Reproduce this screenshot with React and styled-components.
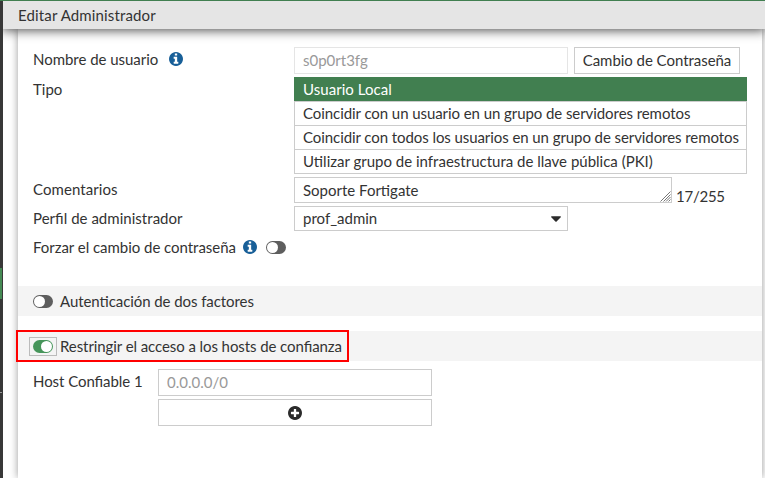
import React from 'react';
import styled, { createGlobalStyle } from 'styled-components';

const Global = createGlobalStyle`
  * { box-sizing: border-box; }
  body { margin: 0; background: #fff; overflow: hidden; }
  body, input, button, textarea { font: 15px/20px Lato, sans-serif; color: #333; }
`;

const Window = styled.div`
  display: flex;
  height: 478px;
  border-top: 1px solid #417f50;
`;

const Rail = styled.div`
  width: 3px;
  flex: none;
  display: flex;
  flex-direction: column;
  background: #383838;
`;

const RailActive = styled.div`
  width: 2px;
  height: 31px;
  margin-top: 267px;
  background: #458a54;
`;

const RailLine = styled.div`
  width: 2px;
  height: 1px;
  margin-top: 93px;
  background: #999;
`;

const Main = styled.div`
  flex: 1;
  display: flex;
  flex-direction: column;
`;

const Header = styled.header`
  position: relative;
  z-index: 1;
  height: 28px;
  flex: none;
  padding: 4px 15px;
  background: #e5e5e5;
  box-shadow: 0 0 12px 1px rgba(0, 0, 0, 0.75);
  clip-path: inset(0 0 -20px 0);
`;

const Text = styled.span`
  letter-spacing: ${(p) => p.$track || 0}px;
  font-feature-settings: 'liga' 1;
  white-space: nowrap;
`;

const Panel = styled.main`
  flex: 1;
  margin: 0 3px 0 15px;
  background: #fff;
  box-shadow: 0 0 8px rgba(0, 0, 0, 0.4);
`;

const Form = styled.div`
  display: flex;
  flex-direction: column;
  gap: 3px;
  padding: 18px 15px 0;
`;

const Row = styled.div`
  display: flex;
  align-items: flex-start;
`;

const Label = styled.label`
  display: flex;
  align-items: center;
  align-self: flex-start;
  width: ${(p) => p.$width || 261}px;
  flex: none;
  white-space: nowrap;
  padding-top: ${(p) => p.$top ?? 2}px;
`;

const Input = styled.input`
  width: 274px;
  height: 27px;
  padding: 0 8px 2px;
  border: 1px solid #ccc;
  border-radius: 0;
  background: #fff;
  outline: none;
  &:disabled { color: #999; border-color: #e5e5e5; }
  &::placeholder { color: #999; opacity: 1; }
`;

const Button = styled.button`
  height: 27px;
  width: ${(p) => p.$width}px;
  margin-left: ${(p) => p.$gap || 0}px;
  display: flex;
  align-items: center;
  justify-content: center;
  padding: 0 0 ${(p) => p.$lift || 0}px;
  white-space: nowrap;
  border: 1px solid #ccc;
  background: #fff;
`;

const Options = styled.div`
  width: 453px;
  border-bottom: 1px solid #ccc;
`;

const Option = styled.div`
  height: 24px;
  padding: 1px 8px;
  border: 1px solid ${(p) => (p.$active ? '#417f50' : '#ccc')};
  border-bottom: 0;
  background: ${(p) => (p.$active ? '#417f50' : '#fff')};
  color: ${(p) => (p.$active ? '#fff' : '#333')};
`;

const CommentBox = styled.div`
  position: relative;
`;

const Comment = styled.textarea`
  display: block;
  width: 378px;
  height: 26px;
  padding: 2px 8px;
  border: 1px solid #ccc;
  overflow: hidden;
  outline: none;
  resize: none;
`;

const Grip = styled.svg`
  position: absolute;
  right: 1px;
  bottom: 1px;
  width: 11px;
  height: 11px;
`;

const Counter = styled.span`
  margin: 9px 0 -3px 4px;
`;

const Select = styled.div`
  width: 274px;
  height: 25px;
  display: flex;
  align-items: center;
  justify-content: space-between;
  padding: 0 6px 0 8px;
  border: 1px solid #ccc;
`;

const SelectValue = styled.span`
  padding-bottom: 2px;
`;

const Icon = styled.svg`
  display: block;
  width: 14px;
  height: 14px;
  flex: none;
  margin-left: ${(p) => p.$gap || 0}px;
`;

const Caret = styled.svg`
  width: 10px;
  height: 6px;
`;

const Switch = styled.span`
  width: 20px;
  height: 13px;
  flex: none;
  display: flex;
  justify-content: ${(p) => (p.$on ? 'flex-end' : 'flex-start')};
  padding: 1px;
  margin-left: ${(p) => p.$gap || 0}px;
  border-radius: 7px;
  background: ${(p) => (p.$on ? '#46955a' : '#5e5e5e')};
  &::before {
    content: '';
    width: 11px;
    height: 11px;
    border-radius: 50%;
    background: #fff;
  }
`;

const Section = styled.section`
  position: relative;
  display: flex;
  align-items: center;
  height: 30px;
  margin-top: ${(p) => p.$top}px;
  padding-left: 11px;
  background: #f4f4f4;
`;

const Focus = styled.span`
  display: flex;
  align-items: center;
  justify-content: center;
  width: 28px;
  height: 19px;
  margin-right: 3px;
  border: 1px solid ${(p) => (p.$on ? '#bbb' : 'transparent')};
`;

const Highlight = styled.span`
  position: absolute;
  left: -2px;
  top: -1px;
  width: 333px;
  height: 32px;
  border: 2px solid #f00;
`;

const Hosts = styled.div`
  display: flex;
  padding: 8px 15px;
`;

const Stack = styled.div`
  display: flex;
  flex-direction: column;
  gap: 3px;
`;

const CIRCLE = 'M1664 896q0 209-103 385.5t-279.5 279.5-385.5 103-385.5-103-279.5-279.5-103-385.5 103-385.5 279.5-279.5 385.5-103 385.5 103 279.5 279.5 103 385.5z';

const Info = ({ gap }) => (
  <Icon $gap={gap} viewBox="128 128 1536 1536" fill="#185f98">
    <path fillRule="evenodd" d={`M1152 1376v-160q0-14-9-23t-23-9h-96v-512q0-14-9-23t-23-9h-320q-14 0-23 9t-9 23v160q0 14 9 23t23 9h96v320h-96q-14 0-23 9t-9 23v160q0 14 9 23t23 9h448q14 0 23-9t9-23zM1024 480v-160q0-14-9-23t-23-9h-192q-14 0-23 9t-9 23v160q0 14 9 23t23 9h192q14 0 23-9t9-23z${CIRCLE}`} />
  </Icon>
);

const Plus = () => (
  <Icon viewBox="128 128 1536 1536" fill="#2b2b2b">
    <path fillRule="evenodd" d={`M1344 960v-128q0-26-19-45t-45-19h-256v-256q0-26-19-45t-45-19h-128q-26 0-45 19t-19 45v256h-256q-26 0-45 19t-19 45v128q0 26 19 45t45 19h256v256q0 26 19 45t45 19h128q26 0 45-19t19-45v-256h256q26 0 45-19t19-45z${CIRCLE}`} />
  </Icon>
);

const TYPES = [
  { name: 'Usuario Local', track: 0.04 },
  { name: 'Coincidir con un usuario en un grupo de servidores remotos', track: -0.07 },
  { name: 'Coincidir con todos los usuarios en un grupo de servidores remotos', track: -0.075 },
  { name: 'Utilizar grupo de infraestructura de llave pública (PKI)', track: 0 },
];

export default function App() {
  return (
    <>
      <Global />
      <Window>
        <Rail>
          <RailActive />
          <RailLine />
        </Rail>
        <Main>
          <Header><Text $track={0.14}>Editar Administrador</Text></Header>
          <Panel>
            <Form>
              <Row>
                <Label><Text $track={-0.03}>Nombre de usuario</Text><Info gap={11} /></Label>
                <Input disabled defaultValue="s0p0rt3fg" />
                <Button $width={166} $gap={6} $lift={1}><Text $track={-0.04}>Cambio de Contraseña</Text></Button>
              </Row>
              <Row>
                <Label>Tipo</Label>
                <Options>
                  {TYPES.map((type, i) => (
                    <Option key={type.name} $active={i === 0}>
                      <Text $track={type.track}>{type.name}</Text>
                    </Option>
                  ))}
                </Options>
              </Row>
              <Row>
                <Label><Text $track={0.08}>Comentarios</Text></Label>
                <CommentBox>
                  <Comment defaultValue="Soporte Fortigate" spellCheck={false} />
                  <Grip viewBox="0 0 11 11">
                    <path d="M.5 10.5L10.5 .5M3.5 10.5L10.5 3.5M6 10.5L10.5 6M8.5 10.5L10.5 8.5" stroke="#777" strokeWidth="1" fill="none" />
                  </Grip>
                </CommentBox>
                <Counter><Text $track={-0.25}>17/255</Text></Counter>
              </Row>
              <Row>
                <Label><Text $track={0.03}>Perfil de administrador</Text></Label>
                <Select>
                  <SelectValue>prof_admin</SelectValue>
                  <Caret viewBox="0 0 10 6"><path d="M0 1Q0 .3 .8 .3H9.2Q10 .3 10 1L5.6 5.5Q5 6 4.4 5.5Z" fill="#2b2b2b" /></Caret>
                </Select>
              </Row>
              <Row>
                <Label $top={3}>
                  <Text $track={-0.035}>Forzar el cambio de contraseña</Text>
                  <Info gap={7} />
                  <Switch $gap={9} />
                </Label>
              </Row>
            </Form>
            <Section $top={29}>
              <Focus><Switch /></Focus>
              <Text $track={-0.07}>Autenticación de dos factores</Text>
            </Section>
            <Section $top={15}>
              <Focus $on><Switch $on /></Focus>
              <Text $track={-0.08}>Restringir el acceso a los hosts de confianza</Text>
              <Highlight />
            </Section>
            <Hosts>
              <Label $width={125}><Text $track={-0.06}>Host Confiable 1</Text></Label>
              <Stack>
                <Input placeholder="0.0.0.0/0" />
                <Button $width={274} aria-label="Agregar host"><Plus /></Button>
              </Stack>
            </Hosts>
          </Panel>
        </Main>
      </Window>
    </>
  );
}
